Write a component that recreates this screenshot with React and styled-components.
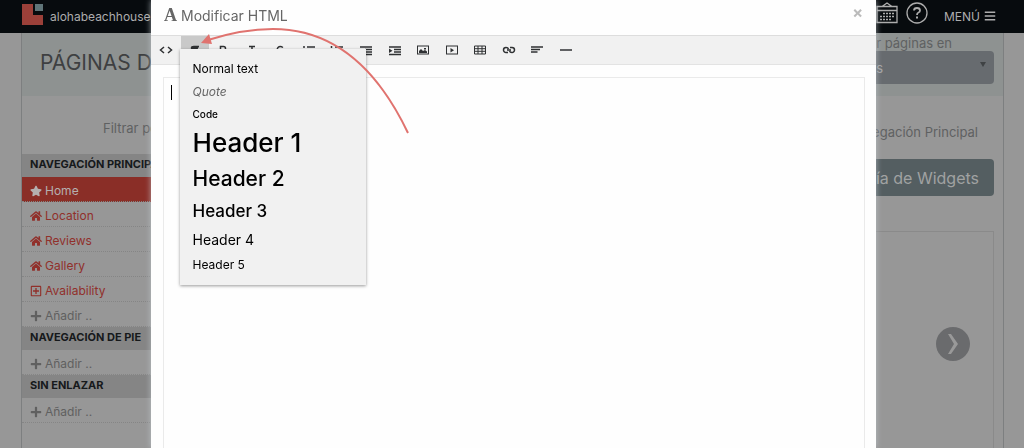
import styled, { createGlobalStyle } from 'styled-components';
import { FaHome, FaStar, FaPlus, FaBars, FaRegPlusSquare } from 'react-icons/fa';

const GlobalStyle = createGlobalStyle`
  * {
    box-sizing: border-box;
  }

  body {
    margin: 0;
    background: #979797;
    color: #5f6162;
    font-family: Inter, 'Open Sans', sans-serif;
    font-size: 13px;
  }

  button, input, select, textarea {
    font-family: inherit;
  }
`;

const Page = styled.div`
  display: flex;
  flex-direction: column;
  min-height: 100vh;
`;

const TopBar = styled.header`
  display: flex;
  align-items: center;
  height: 33px;
  padding: 0 28px 7px 22px;
  background: #070b0e;
  color: #adadad;
`;

const Brand = styled.a`
  display: flex;
  align-items: center;
  gap: 7px;
  margin-top: 3px;
  color: inherit;
  font-size: 12px;
  text-decoration: none;

  span {
    padding-top: 4px;
  }
`;

const TopActions = styled.nav`
  display: flex;
  align-items: center;
  gap: 8px;
  margin-left: auto;
`;

const IconButton = styled.button`
  display: flex;
  padding: 0;
  border: 0;
  background: none;
  color: inherit;
  cursor: pointer;
`;

const MenuButton = styled(IconButton)`
  align-items: center;
  gap: 4px;
  margin: 6px 0 0 8px;
  font-size: 12px;
`;

const Content = styled.div`
  display: flex;
  flex: 1;
  flex-direction: column;
  margin: 0 20px 0 21px;
  border: solid #7d7f80;
  border-width: 0 1px;
`;

const PageHeader = styled.div`
  display: flex;
  justify-content: space-between;
  height: 63px;
  padding: 2px 9px 0 18px;
  background: #8e9291;
`;

const Title = styled.h1`
  margin: 0;
  color: #3e4041;
  font-size: 21px;
  font-weight: 400;
  line-height: 56px;
`;

const SelectField = styled.label`
  display: flex;
  flex-direction: column;
  width: 300px;
  line-height: 16px;
  text-align: right;

  span {
    padding-right: 42px;
  }
`;

const SelectBox = styled.div`
  display: grid;
  align-items: center;

  > * {
    grid-area: 1 / 1;
  }

  svg {
    margin: 0 8px 6px auto;
    pointer-events: none;
  }
`;

const Select = styled.select`
  height: 33px;
  padding: 0 111px 0 12px;
  border: 0;
  border-radius: 4px;
  background: #676b6f;
  color: #a5a5a5;
  font-size: 13px;
  text-align-last: right;
  appearance: none;
`;

const Columns = styled.div`
  display: grid;
  flex: 1;
  grid-template-columns: 260px 1fr;
`;

const Sidebar = styled.aside`
  padding-top: 22px;
`;

const Filter = styled.p`
  margin: 0 0 16px;
  padding-left: 81px;
  line-height: 20px;
`;

const SectionTitle = styled.h2`
  height: 23px;
  margin: 0;
  padding-left: 8px;
  background: #858585;
  color: #16191b;
  font-size: 11px;
  font-weight: 700;
  line-height: 20px;
`;

const NavList = styled.ul`
  margin: 0;
  padding: 0;
  list-style: none;
`;

const NavLink = styled.a`
  display: flex;
  align-items: center;
  gap: 3px;
  height: 25px;
  padding: 3px 8px 0;
  border-bottom: 1px dotted #858585;
  background: ${({ $active }) => ($active ? '#8a2e27' : 'none')};
  color: ${({ $active, $muted }) => ($active ? '#b5b0b0' : $muted ? '#606060' : '#91302b')};
  font-size: 12px;
  text-decoration: none;

  svg {
    width: 12px;
    height: 12px;
  }
`;

const Main = styled.main`
  display: flex;
  flex-direction: column;
  align-items: flex-end;
  padding: 26px 9px 0 0;
`;

const CurrentNav = styled.p`
  margin: 0 16px 17px 0;
  line-height: 20px;
`;

const WidgetsButton = styled.button`
  height: 37px;
  padding: 0 15px 0 40px;
  border: 0;
  border-radius: 4px;
  background: #545e61;
  color: #a0a2a2;
  font-size: 16px;
`;

const Preview = styled.div`
  display: flex;
  flex: 1;
  align-items: center;
  justify-content: flex-end;
  width: 100%;
  margin-top: 35px;
  padding: 7px 23px 0 0;
  border: 1px solid #8a8a8a;
  border-bottom: 0;
`;

const NextButton = styled.button`
  display: flex;
  align-items: center;
  justify-content: center;
  width: 34px;
  height: 34px;
  padding: 0;
  border: 0;
  border-radius: 50%;
  background: #6a6b6d;
  color: #999;
`;

const Overlay = styled.div`
  position: fixed;
  inset: 0;
  display: flex;
  padding: 0 148px 0 151px;
`;

const Modal = styled.section`
  display: flex;
  flex: 1;
  flex-direction: column;
  min-width: 0;
  background: #fefefe;
  box-shadow: 0 0 6px rgba(200, 210, 215, 0.7);
`;

const ModalHeader = styled.div`
  display: flex;
  align-items: center;
  gap: 4px;
  height: 36px;
  padding: 0 13px 5px;
  border-bottom: 1px solid #ddd;
  color: #666;
`;

const FontMark = styled.span`
  font-family: 'Liberation Serif', serif;
  font-size: 18px;
  font-weight: 700;
`;

const ModalTitle = styled.h2`
  margin: 0;
  font-size: 14px;
  font-weight: 400;
`;

const CloseButton = styled(IconButton)`
  margin-left: auto;
  padding-bottom: 6px;
  color: #bbb;
  font-size: 16px;
  font-weight: 700;
`;

const Toolbar = styled.div`
  height: 29px;
  padding-left: 1px;
  border-bottom: 1px solid #e3e3e3;
  background: #f1f1f1;
`;

const Tools = styled.div`
  display: flex;
  width: 428px;
  height: 28px;
`;

const ToolSlot = styled.div`
  position: relative;
  display: flex;
  flex: 1;
`;

const Tool = styled.button`
  display: flex;
  flex: 1;
  align-items: center;
  justify-content: center;
  padding: 0;
  border: 0;
  background: ${({ $open }) => ($open ? '#c9c9c9' : 'none')};
  color: #2f3133;
`;

const Dropdown = styled.div`
  position: absolute;
  z-index: 1;
  top: 13px;
  left: -1px;
  display: flex;
  flex-direction: column;
  width: 186px;
  padding: 8px 0;
  background: #f1f1f1;
  box-shadow: 0 1px 3px rgba(0, 0, 0, 0.4);
`;

const FormatOption = styled.button`
  height: ${({ $height }) => $height}px;
  padding: 0 13px;
  border: 0;
  background: none;
  color: ${({ $quote }) => ($quote ? '#666' : '#000')};
  font-size: ${({ $size }) => $size}px;
  font-style: ${({ $quote }) => ($quote ? 'italic' : 'normal')};
  font-weight: ${({ $weight }) => $weight || 400};
  line-height: 1;
  text-align: left;
`;

const Editor = styled.div`
  position: relative;
  display: flex;
  flex: 1;
  padding: 12px 11px 0 12px;
`;

const EditorInput = styled.textarea`
  flex: 1;
  padding: 7px;
  border: 1px solid #eaeaea;
  border-bottom: 0;
  outline: 0;
  background: #fefefe;
  resize: none;
`;

const Caret = styled.span`
  position: absolute;
  top: 20px;
  left: 20px;
  width: 1px;
  height: 15px;
  background: #000;
`;

const Pointer = styled.svg`
  position: fixed;
  z-index: 2;
  top: 20px;
  left: 195px;
  pointer-events: none;
`;

const tools = [
  { name: 'HTML', shape: <path d="M5 5 1.500 8 5 11M9 5l3.500 3L9 11" /> },
  { name: 'Formato', open: true, shape: <path d="M6 12V4.500h5M9 4.500v8M6 4.500Q3.500 4.500 3.500 6T6 8z" fill="currentColor" /> },
  { name: 'Negrita', shape: <path d="M4.500 4.500v8h3q2.500 0 2.500-2t-2-2H4.500h3q2 0 2-2t-2-2z" /> },
  { name: 'Cursiva', shape: <path d="M4 4.500h6M7 4v8" /> },
  { name: 'Tachado', shape: <path d="M10 5.500Q7 3.500 5 5.500t2 3 3 3-5 0M2 8h10" /> },
  { name: 'Lista', shape: <path d="M1 5h2M5 5h8M1 8h2M5 8h8M1 11h2M5 11h8" /> },
  { name: 'Lista numerada', shape: <path d="M1.500 4v2M5 5h8M1.500 7v2M5 8h8M1.500 10v2M5 11h8" /> },
  { name: 'Reducir sangría', shape: <path d="M1 5h12M6 7.500h7M6 10h7M6 12.500h7" /> },
  {
    name: 'Aumentar sangría',
    shape: (
      <>
        <path d="M1 5h12M6 7.500h7M6 10h7M1 12.500h12" />
        <path d="m1 6.500 3.500 2.200L1 11z" fill="currentColor" stroke="none" />
      </>
    ),
  },
  {
    name: 'Imagen',
    shape: (
      <>
        <rect x="1.500" y="4" width="11" height="8" strokeWidth="1" />
        <path d="M3 11V9l2-2 2 2 2-1 2 1.500V11zM8 6h2v1.500H8z" fill="currentColor" stroke="none" />
      </>
    ),
  },
  {
    name: 'Vídeo',
    shape: (
      <>
        <rect x="1.500" y="4" width="11" height="8" strokeWidth="1" />
        <path d="M5.500 6v4.500l3.500-2.200z" fill="currentColor" stroke="none" />
      </>
    ),
  },
  { name: 'Tabla', shape: <path d="M1.500 4h11v8h-11zM1.500 6.700h11M1.500 9.300h11M5 4v8M9 4v8" strokeWidth="1" /> },
  { name: 'Enlace', shape: <path d="M6 10.500H4a2.500 2.500 0 0 1 0-5Q6 5.500 6.500 7M8 5.500h2a2.500 2.500 0 0 1 0 5Q8 10.500 7.500 9M5 8h4" /> },
  { name: 'Alinear', shape: <path d="M1 5h12M1 7.500h9M1 10h6.500" /> },
  { name: 'Línea', shape: <path d="M1 8h12" /> },
];

const formats = [
  { label: 'Normal text', size: 12, height: 23 },
  { label: 'Quote', size: 12, height: 23, quote: true },
  { label: 'Code', size: 10, height: 22, weight: 500 },
  { label: 'Header 1', size: 26, height: 36, weight: 500 },
  { label: 'Header 2', size: 21, height: 35, weight: 500 },
  { label: 'Header 3', size: 17, height: 30, weight: 500 },
  { label: 'Header 4', size: 14, height: 27 },
  { label: 'Header 5', size: 12, height: 24 },
];

const sections = [
  {
    title: 'NAVEGACIÓN PRINCIPAL',
    links: [
      { label: 'Home', Icon: FaStar, active: true },
      { label: 'Location', Icon: FaHome },
      { label: 'Reviews', Icon: FaHome },
      { label: 'Gallery', Icon: FaHome },
      { label: 'Availability', Icon: FaRegPlusSquare },
      { label: 'Añadir ..', Icon: FaPlus, muted: true },
    ],
  },
  { title: 'NAVEGACIÓN DE PIE', links: [{ label: 'Añadir ..', Icon: FaPlus, muted: true }] },
  { title: 'SIN ENLAZAR', links: [{ label: 'Añadir ..', Icon: FaPlus, muted: true }] },
];

function Header() {
  return (
    <TopBar>
      <Brand href="#">
        <svg width="21" height="21" viewBox="0 0 21 21">
          <path d="M0 0h11v11h10v10H0z" fill="#9b4039" />
          <path d="M13 0h8v7h-8z" fill="#5f7478" />
        </svg>
        <span>alohabeachhouse</span>
      </Brand>
      <TopActions>
        <IconButton aria-label="Calendario">
          <svg width="22" height="22" viewBox="0 0 22 22" fill="none" stroke="currentColor">
            <path d="M1 4.500h20v16H1zM1 8.500h20M6 4.500 11 1l5 3.500" strokeWidth="1.300" />
            <path d="M7 11.500h12M4 14.500h15M4 17.500h12" strokeWidth="1.500" strokeDasharray="2 1" />
          </svg>
        </IconButton>
        <IconButton aria-label="Ayuda">
          <svg width="22" height="22" viewBox="0 0 22 22" fill="none" stroke="currentColor">
            <circle cx="11" cy="11" r="10" strokeWidth="1.300" />
            <path d="M8 8.500Q8 6 11 6t3 2.500q0 1.500-1.500 2T11 13" strokeWidth="1.800" />
            <path d="M11 14.500v2" strokeWidth="2" />
          </svg>
        </IconButton>
        <MenuButton>
          MENÚ <FaBars size={12} />
        </MenuButton>
      </TopActions>
    </TopBar>
  );
}

function Navigation() {
  return (
    <Sidebar>
      <Filter>Filtrar por</Filter>
      {sections.map(({ title, links }) => (
        <div key={title}>
          <SectionTitle>{title}</SectionTitle>
          <NavList>
            {links.map(({ label, Icon, active, muted }) => (
              <li key={label}>
                <NavLink href="#" $active={active} $muted={muted}>
                  <Icon />
                  {label}
                </NavLink>
              </li>
            ))}
          </NavList>
        </div>
      ))}
    </Sidebar>
  );
}

function HtmlModal() {
  return (
    <Overlay>
      <Modal role="dialog" aria-labelledby="modal-title">
        <ModalHeader>
          <FontMark>A</FontMark>
          <ModalTitle id="modal-title">Modificar HTML</ModalTitle>
          <CloseButton aria-label="Cerrar">×</CloseButton>
        </ModalHeader>
        <Toolbar>
          <Tools>
            {tools.map(({ name, open, shape }) => (
              <ToolSlot key={name}>
                <Tool aria-label={name} $open={open}>
                  <svg width="14" height="16" viewBox="0 0 14 16" fill="none" stroke="currentColor" strokeWidth="1.500">
                    {shape}
                  </svg>
                </Tool>
                {open && (
                  <Dropdown>
                    {formats.map(({ label, size, height, quote, weight }) => (
                      <FormatOption key={label} $size={size} $height={height} $quote={quote} $weight={weight}>
                        {label}
                      </FormatOption>
                    ))}
                  </Dropdown>
                )}
              </ToolSlot>
            ))}
          </Tools>
        </Toolbar>
        <Editor>
          <EditorInput aria-label="Contenido" />
          <Caret />
        </Editor>
      </Modal>
    </Overlay>
  );
}

function App() {
  return (
    <>
      <GlobalStyle />
      <Page>
        <Header />
        <Content>
          <PageHeader>
            <Title>PÁGINAS DE</Title>
            <SelectField>
              <span>Mostrar páginas en</span>
              <SelectBox>
                <Select defaultValue="Todos los idiomas">
                  <option>Todos los idiomas</option>
                </Select>
                <svg width="6" height="5" viewBox="0 0 6 5">
                  <path d="M0 0h6L3 5z" fill="#3f4244" />
                </svg>
              </SelectBox>
            </SelectField>
          </PageHeader>
          <Columns>
            <Navigation />
            <Main>
              <CurrentNav>Navegación Principal</CurrentNav>
              <WidgetsButton>Galería de Widgets</WidgetsButton>
              <Preview>
                <NextButton aria-label="Siguiente">
                  <svg width="12" height="20" viewBox="0 0 12 20">
                    <path d="M1 0h3l7 10-7 10H1l6-10z" fill="currentColor" />
                  </svg>
                </NextButton>
              </Preview>
            </Main>
          </Columns>
        </Content>
      </Page>
      <HtmlModal />
      <Pointer width="220" height="120" viewBox="195 20 220 120" fill="none">
        <path d="M408 133C378 70 334 29 273 29 250 29 230 33 208 40" stroke="#e0736f" strokeWidth="2" />
        <path d="m201 43 8-9 3 10z" fill="#e0736f" />
      </Pointer>
    </>
  );
}

export default App;
